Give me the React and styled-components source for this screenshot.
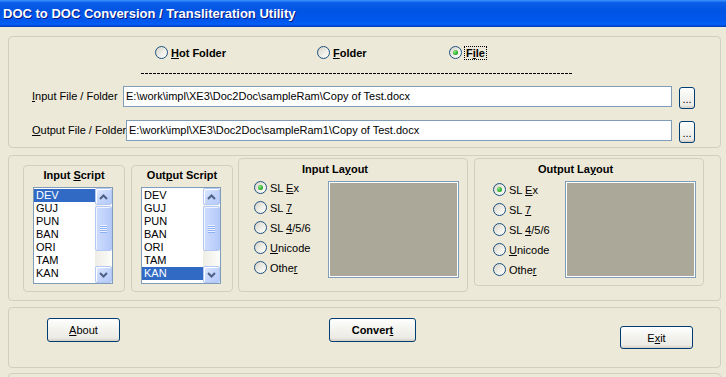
import styled, { createGlobalStyle } from 'styled-components'

const GlobalStyle = createGlobalStyle`
  html, body {
    margin: 0;
    padding: 0;
    background: #ece9d8;
  }
  body {
    font-family: "Liberation Sans", Arial, sans-serif;
    font-size: 11px;
    color: #000;
  }
`

const Window = styled.div`
  width: 726px;
  height: 377px;
  overflow: hidden;
  background: #ece9d8;
  display: flex;
  flex-direction: column;
`

const TitleBar = styled.div`
  flex: none;
  height: 27px;
  box-sizing: border-box;
  padding: 0 0 1px 3px;
  display: flex;
  align-items: center;
  color: #fff;
  font-weight: bold;
  font-size: 13px;
  text-shadow: 1px 1px #0a1883;
  background: linear-gradient(
    180deg,
    #3d95ff 0%,
    #0a5ee8 10%,
    #0054e3 40%,
    #0058ee 80%,
    #0060f8 90%,
    #0046cf 96%,
    #003cb8 100%
  );
`

const Body = styled.div`
  flex: 1;
  display: flex;
  flex-direction: column;
  padding: 9px 5px 0 8px;
`

const Group = styled.div`
  flex: none;
  box-sizing: border-box;
  height: ${p => p.$h}px;
  margin-top: ${p => p.$mt || 0}px;
  border: 1px solid #d0d0bf;
  border-radius: 4px;
`

const U = styled.span`
  text-decoration: underline;
  text-underline-offset: 1px;
`

/* radios */
const RadioRow = styled.div`
  display: flex;
  height: 13px;
  margin-top: 9px;
  padding-left: 146px;
`

const RadioItem = styled.label`
  display: flex;
  align-items: center;
  gap: 3px;
  height: 13px;
  width: ${p => (p.$w ? `${p.$w}px` : 'auto')};
  font-weight: ${p => (p.$bold ? 'bold' : 'normal')};
  white-space: nowrap;
`

const Circle = styled.span`
  flex: none;
  box-sizing: border-box;
  width: 13px;
  height: 13px;
  border-radius: 50%;
  border: 1px solid #1c5180;
  background: linear-gradient(135deg, #d6d4c8 0%, #efeee8 55%, #ffffff 100%);
  display: flex;
  align-items: center;
  justify-content: center;
  &::after {
    content: '';
    display: ${p => (p.$checked ? 'block' : 'none')};
    width: 5px;
    height: 5px;
    border-radius: 50%;
    background: radial-gradient(circle at 35% 35%, #8ee88c 0%, #2fb32d 55%, #1a8f1a 100%);
  }
`

const Focus = styled.span`
  outline: 1px dotted #000;
  outline-offset: 0;
  padding: 0 1px;
`

const Radio = ({ checked, children, w, bold }) => (
  <RadioItem $w={w} $bold={bold}>
    <Circle $checked={checked} />
    <span>{children}</span>
  </RadioItem>
)

const DashLine = styled.div`
  width: 431px;
  height: 1px;
  margin: 14px 0 0 132px;
  background: repeating-linear-gradient(90deg, #000 0 3px, transparent 3px 4px);
`

/* file rows */
const FieldRow = styled.div`
  display: flex;
  align-items: flex-start;
  height: 23px;
  margin-top: ${p => p.$mt}px;
  padding: 0 25px 0 23px;
`

const FieldLabel = styled.div`
  flex: none;
  width: ${p => p.$w}px;
  line-height: 21px;
  white-space: nowrap;
`

const TextBox = styled.div`
  flex: 1;
  box-sizing: border-box;
  height: 21px;
  border: 1px solid #7f9db9;
  background: #fff;
  padding: 0 2px;
  line-height: 19px;
  white-space: nowrap;
  overflow: hidden;
`

const Button = styled.button`
  box-sizing: border-box;
  flex: none;
  width: ${p => p.$w}px;
  height: ${p => p.$h || 23}px;
  margin: ${p => p.$m || '0'};
  padding: 0;
  border: 1px solid #003c74;
  border-radius: 3px;
  background: linear-gradient(180deg, #ffffff 0%, #f4f4f0 40%, #ecebe6 85%, #d6d0c5 100%);
  font-family: "Liberation Sans", Arial, sans-serif;
  font-size: 11px;
  font-weight: ${p => (p.$bold ? 'bold' : 'normal')};
  color: #000;
`

const DotsButton = styled(Button)`
  display: flex;
  align-items: flex-end;
  justify-content: center;
  padding-bottom: 3px;
  line-height: 1;
`

/* scripts */
const ScriptRow = styled.div`
  display: flex;
  align-items: flex-start;
  padding-left: 14px;
`

const ScriptGroup = styled.div`
  box-sizing: border-box;
  width: 102px;
  height: 127px;
  margin: 9px 0 0 ${p => p.$ml || 0}px;
  border: 1px solid #d0d0bf;
  border-radius: 4px;
`

const GroupTitle = styled.div`
  font-weight: bold;
  line-height: 13px;
  padding-top: 3px;
  text-align: center;
  white-space: nowrap;
`

const ListBox = styled.div`
  box-sizing: border-box;
  width: 80px;
  height: 97px;
  margin: 5px 0 0 9px;
  border: 1px solid #7f9db9;
  background: #fff;
  display: flex;
`

const Items = styled.div`
  flex: 1;
  padding-top: 1px;
`

const Item = styled.div`
  height: 13px;
  line-height: 13px;
  padding-left: 2px;
  background: ${p => (p.$sel ? '#316ac5' : 'transparent')};
  color: ${p => (p.$sel ? '#fff' : '#000')};
`

const ScrollBar = styled.div`
  width: 17px;
  display: flex;
  flex-direction: column;
  background: linear-gradient(90deg, #eeede5, #fdfdfa);
`

const ScrollBtn = styled.div`
  box-sizing: border-box;
  height: 17px;
  border: 1px solid #b4c8f6;
  border-radius: 2px;
  background: linear-gradient(135deg, #e0e9fe 0%, #c4d5fc 50%, #b4cafa 100%);
  box-shadow: inset 1px 1px #fff;
  display: flex;
  align-items: center;
  justify-content: center;
`

const Thumb = styled.div`
  box-sizing: border-box;
  height: 45px;
  margin-top: 1px;
  border: 1px solid #b4c8f6;
  border-radius: 2px;
  background: linear-gradient(90deg, #cddbfd 0%, #c0d2fb 60%, #b3c9f9 100%);
  box-shadow: inset 1px 1px #f0f4ff;
  display: flex;
  flex-direction: column;
  align-items: center;
  justify-content: center;
  gap: 1px;
`

const Grip = styled.span`
  width: 7px;
  height: 1px;
  background: #eef3ff;
  box-shadow: 0 1px #8cb0f8;
`

const Track = styled.div`
  flex: 1;
`

const Arrow = ({ up }) => (
  <svg width="9" height="6" viewBox="0 0 9 6">
    <polyline
      points={up ? '1,5 4.5,1.5 8,5' : '1,1 4.5,4.5 8,1'}
      fill="none"
      stroke="#4d6185"
      strokeWidth="2"
    />
  </svg>
)

const scripts = ['DEV', 'GUJ', 'PUN', 'BAN', 'ORI', 'TAM', 'KAN']

const ScriptList = ({ selected }) => (
  <ListBox>
    <Items>
      {scripts.map((s, i) => (
        <Item key={s} $sel={i === selected}>{s}</Item>
      ))}
    </Items>
    <ScrollBar>
      <ScrollBtn><Arrow up /></ScrollBtn>
      <Thumb><Grip /><Grip /><Grip /><Grip /></Thumb>
      <Track />
      <ScrollBtn><Arrow /></ScrollBtn>
    </ScrollBar>
  </ListBox>
)

/* layouts */
const LayoutGroup = styled.div`
  box-sizing: border-box;
  width: 230px;
  height: ${p => p.$h}px;
  margin: 2px 0 0 ${p => p.$ml}px;
  border: 1px solid #d0d0bf;
  border-radius: 4px;
`

const LayoutTitle = styled.div`
  font-weight: bold;
  line-height: 13px;
  padding: 4px 0 0 63px;
  white-space: nowrap;
`

const LayoutBody = styled.div`
  display: flex;
  margin-top: 5px;
`

const RadioCol = styled.div`
  box-sizing: border-box;
  width: ${p => p.$w}px;
  padding: ${p => p.$pt}px 0 0 ${p => p.$pl}px;
  display: flex;
  flex-direction: column;
  gap: 7px;
`

const Preview = styled.div`
  box-sizing: border-box;
  width: 131px;
  height: 97px;
  border: 1px solid #7f9db9;
  box-shadow: inset -1px -1px #fff, inset 1px 1px #fff;
  background: #aca899;
`

const LayoutOptions = ({ pl, pt, w }) => (
  <LayoutBody>
    <RadioCol $pl={pl} $pt={pt} $w={w}>
      <Radio checked>SL <U>E</U>x</Radio>
      <Radio>SL <U>7</U></Radio>
      <Radio>SL <U>4</U>/5/6</Radio>
      <Radio><U>U</U>nicode</Radio>
      <Radio>Othe<U>r</U></Radio>
    </RadioCol>
    <Preview />
  </LayoutBody>
)

/* actions */
const ActionRow = styled.div`
  display: flex;
  align-items: flex-start;
  padding: 10px 0 0 38px;
`

export default function App() {
  return (
    <Window>
      <GlobalStyle />
      <TitleBar>DOC to DOC Conversion / Transliteration Utility</TitleBar>
      <Body>
        <Group $h={112}>
          <RadioRow>
            <Radio w={162} bold><U>H</U>ot Folder</Radio>
            <Radio w={132} bold><U>F</U>older</Radio>
            <Radio checked bold><Focus>F<U>i</U>le</Focus></Radio>
          </RadioRow>
          <DashLine />
          <FieldRow $mt={12}>
            <FieldLabel $w={91}><U>I</U>nput File / Folder</FieldLabel>
            <TextBox>E:\work\impl\XE3\Doc2Doc\sampleRam\Copy of Test.docx</TextBox>
            <DotsButton $w={16} $h={22} $m="1px 0 0 7px">...</DotsButton>
          </FieldRow>
          <FieldRow $mt={11}>
            <FieldLabel $w={94}><U>O</U>utput File / Folder</FieldLabel>
            <TextBox>E:\work\impl\XE3\Doc2Doc\sampleRam1\Copy of Test.docx</TextBox>
            <DotsButton $w={16} $h={22} $m="1px 0 0 7px">...</DotsButton>
          </FieldRow>
        </Group>

        <Group $h={146} $mt={7}>
          <ScriptRow>
            <ScriptGroup>
              <GroupTitle>Input <U>S</U>cript</GroupTitle>
              <ScriptList selected={0} />
            </ScriptGroup>
            <ScriptGroup $ml={6}>
              <GroupTitle>Out<U>p</U>ut Script</GroupTitle>
              <ScriptList selected={6} />
            </ScriptGroup>
            <LayoutGroup $h={134} $ml={5}>
              <LayoutTitle>Input La<U>y</U>out</LayoutTitle>
              <LayoutOptions pl={15} pt={0} w={89} />
            </LayoutGroup>
            <LayoutGroup $h={128} $ml={6}>
              <LayoutTitle>Output La<U>y</U>out</LayoutTitle>
              <LayoutOptions pl={18} pt={2} w={90} />
            </LayoutGroup>
          </ScriptRow>
        </Group>

        <Group $h={61} $mt={6}>
          <ActionRow>
            <Button $w={73} $h={24}><U>A</U>bout</Button>
            <Button $w={87} $h={24} $bold $m="0 0 0 209px">Conver<U>t</U></Button>
            <Button $w={73} $h={23} $m="8px 0 0 204px">E<U>x</U>it</Button>
          </ActionRow>
        </Group>

        <Group $h={30} $mt={5} />
      </Body>
    </Window>
  )
}
